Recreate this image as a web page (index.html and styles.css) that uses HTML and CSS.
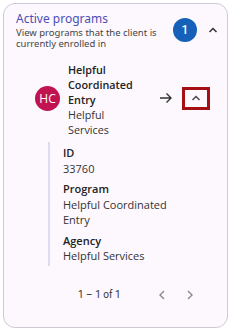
FILE: index.html
```html
<!DOCTYPE html>
<html>
<head>
<meta charset="utf-8">
<link rel="stylesheet" href="styles.css">
</head>
<body>
<div class="card">
  <div class="header">
    <div class="htext">
      <div class="title">Active programs</div>
      <div class="subtitle">View programs that the client is currently enrolled in</div>
    </div>
    <div class="badge">1</div>
    <svg class="chev" width="12" height="12" viewBox="0 0 12 12"><path d="M2.5 8 L6 4.5 L9.5 8" fill="none" stroke="#333" stroke-width="1.5"/></svg>
  </div>
  <div class="item">
    <div class="avatar">HC</div>
    <div class="itext">
      <div class="iname">Helpful Coordinated Entry</div>
      <div class="iagency">Helpful Services</div>
    </div>
    <svg class="arrow" width="14" height="12" viewBox="0 0 14 12"><path d="M1 6 H12 M7.5 1.5 L12 6 L7.5 10.5" fill="none" stroke="#333" stroke-width="1.4"/></svg>
    <div class="toggle">
      <svg width="12" height="10" viewBox="0 0 12 10"><path d="M2.5 7 L6 3.5 L9.5 7" fill="none" stroke="#444" stroke-width="1.4"/></svg>
    </div>
  </div>
  <div class="details">
    <div class="field"><div class="label">ID</div><div class="value">33760</div></div>
    <div class="field"><div class="label">Program</div><div class="value">Helpful Coordinated Entry</div></div>
    <div class="field"><div class="label">Agency</div><div class="value">Helpful Services</div></div>
  </div>
  <div class="pager">
    <span class="range">1 – 1 of 1</span>
    <svg class="pbtn" width="10" height="12" viewBox="0 0 10 12"><path d="M7 2 L3 6 L7 10" fill="none" stroke="#888" stroke-width="1.4"/></svg>
    <svg class="pbtn" width="10" height="12" viewBox="0 0 10 12"><path d="M3 2 L7 6 L3 10" fill="none" stroke="#888" stroke-width="1.4"/></svg>
  </div>
</div>
</body>
</html>
```
FILE: styles.css
```css
html, body { margin: 0; padding: 0; background: #ffffff; }
body { font-family: "Open Sans", "Noto Sans", sans-serif; color: #222; }
.card {
  margin: 3px;
  width: 223px;
  height: 323px;
  border: 1px solid #cfc9d6;
  border-radius: 12px;
  background: #fdf8fd;
  display: flex;
  flex-direction: column;
  box-sizing: content-box;
}
.header {
  display: flex;
  align-items: center;
  padding: 7px 8px 0 12px;
}
.htext { flex: 1; }
.title {
  font-family: "Noto Sans", sans-serif;
  font-size: 12px;
  line-height: 16px;
  color: #4a4fb5;
}
.subtitle {
  font-family: "Noto Sans", sans-serif;
  font-size: 9.5px;
  line-height: 11px;
  color: #444;
  width: 150px;
}
.badge {
  width: 24px; height: 24px;
  border-radius: 50%;
  background: #1560b8;
  color: #fff;
  font-family: Roboto, sans-serif;
  font-size: 12px;
  font-weight: 500;
  display: flex; align-items: center; justify-content: center;
  margin-right: 10px;
  flex: none;
}
.chev { flex: none; }
.item {
  display: flex;
  align-items: center;
  padding: 13px 0 0 31px;
}
.avatar {
  width: 25px; height: 25px;
  border-radius: 50%;
  background: #c0134f;
  color: #fff;
  font-size: 12px;
  display: flex; align-items: center; justify-content: center;
  flex: none;
  margin-top: -2px;
}
.itext { margin-left: 8px; width: 72px; margin-right: 13px; }
.iname { font-weight: 600; font-size: 10.8px; line-height: 15px; color: #222; }
.iagency { font-size: 10.8px; line-height: 15px; color: #333; }
.arrow { margin-left: 6px; margin-top: -3px; }
.toggle {
  margin-left: 9px;
  margin-top: -3px;
  width: 22px; height: 17px;
  border: 3px solid #a30f14;
  display: flex; align-items: center; justify-content: center;
}
.details {
  margin: 5px 0 0 44px;
  width: 118px;
  border-left: 2px solid #dcdcf2;
  padding: 4px 0 2px 13px;
}
.field { margin-bottom: 6px; }
.field:last-child { margin-bottom: 0; }
.label { font-weight: 600; font-size: 11px; line-height: 14.5px; color: #222; }
.value { font-size: 11px; line-height: 15.5px; color: #333; }
.pager {
  display: flex;
  align-items: center;
  padding: 23px 0 0 74px;
}
.range { font-family: Roboto, sans-serif; font-size: 10px; color: #333; width: 79px; }
.pbtn { margin-right: 18px; }
```
